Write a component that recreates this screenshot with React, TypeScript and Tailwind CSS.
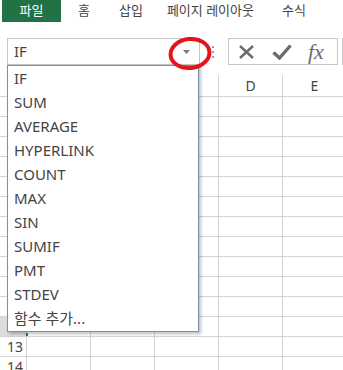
import React from "react";

const FUNCS = ["IF", "SUM", "AVERAGE", "HYPERLINK", "COUNT", "MAX", "SIN", "SUMIF", "PMT", "STDEV", "함수 추가..."];
const COLS = ["A", "B", "C", "D", "E"];
const ROWS = Array.from({ length: 14 }, (_, i) => i + 1);

const font = { fontFamily: '"Noto Sans", "Noto Sans CJK KR", sans-serif' };

export default function App() {
    return (
        <div className="relative w-[343px] h-[370px] overflow-hidden bg-white text-[#444]" style={font}>
            {/* ribbon tabs */}
            <div className="flex items-center h-[22px] text-[13px]">
                <div className="ml-[2px] w-[59px] h-[22px] bg-[#217346] text-white flex items-center justify-center">파일</div>
                <div className="ml-[17px]">홈</div>
                <div className="ml-[29px]">삽입</div>
                <div className="ml-[24px]">페이지 레이아웃</div>
                <div className="ml-[28px]">수식</div>
            </div>

            {/* formula bar */}
            <div className="flex items-center mt-[16px] h-[27px]">
                <div className="ml-[7px] w-[193px] h-[27px] border border-[#c6c6c6] flex items-center justify-between pl-[6px] pr-[9px] text-[15px]">
                    <span>IF</span>
                    <svg width="7" height="4" viewBox="0 0 7 4">
                        <path d="M0 0 L7 0 L3.5 4 Z" fill="#7a7a7a" />
                    </svg>
                </div>
                <div className="ml-[12px] flex flex-col gap-[3px]">
                    <span className="w-[2px] h-[2px] bg-[#a0a0a0]" />
                    <span className="w-[2px] h-[2px] bg-[#a0a0a0]" />
                    <span className="w-[2px] h-[2px] bg-[#a0a0a0]" />
                </div>
                <div className="ml-[14px] w-[110px] h-[27px] border border-[#c6c6c6] flex items-center">
                    <svg className="ml-[10px]" width="15" height="14" viewBox="0 0 15 14">
                        <path d="M1 1 L14 13 M14 1 L1 13" stroke="#6b6b6b" strokeWidth="2.4" />
                    </svg>
                    <svg className="ml-[18px]" width="20" height="16" viewBox="0 0 20 16">
                        <path d="M1.5 8.5 L7.5 14 L18.5 1.5" stroke="#6b6b6b" strokeWidth="3.4" fill="none" />
                    </svg>
                    <span className="ml-[16px] text-[22px] italic text-[#6b6b6b] leading-none" style={{ fontFamily: '"Liberation Serif", serif' }}>
                        fx
                    </span>
                </div>
                <div className="ml-[4px] w-px h-[27px] bg-[#c6c6c6]" />
            </div>

            {/* sheet grid */}
            <div className="mt-[10px]">
                <div className="flex h-[22px] border-b border-[#d4d4d4]">
                    <div className="w-[27px] shrink-0 border-r border-[#d4d4d4]" />
                    {COLS.map((c) => (
                        <div key={c} className="w-[64px] shrink-0 border-r border-[#d4d4d4] flex items-center justify-center text-[14px]">
                            {c === "D" || c === "E" ? c : ""}
                        </div>
                    ))}
                </div>
                {ROWS.map((r) => (
                    <div key={r} className="flex h-[20px] border-b border-[#d4d4d4]">
                        <div
                            className={`w-[27px] shrink-0 border-r border-[#d4d4d4] flex items-center pl-[7px] text-[14px] ${
                                r === 12 ? "bg-[#dcdcdc]" : ""
                            }`}
                        >
                            {r >= 13 ? r : ""}
                        </div>
                        {COLS.map((c) => (
                            <div key={c} className="w-[64px] shrink-0 border-r border-[#d4d4d4]" />
                        ))}
                    </div>
                ))}
            </div>

            {/* function dropdown */}
            <div className="absolute left-[7px] top-[65px] w-[192px] bg-white border border-[#7b8fab] shadow-[2px_2px_3px_rgba(0,0,0,0.25)] pb-[1px]">
                {FUNCS.map((f) => (
                    <div key={f} className="h-[24px] flex items-center pl-[6px] text-[15px]">
                        {f}
                    </div>
                ))}
            </div>
            <div className="absolute left-[26px] top-[333px] w-[2px] h-[3px] bg-[#217346]" />

            {/* annotation circle */}
            <svg className="absolute left-[166px] top-[35px]" width="48" height="38" viewBox="0 0 48 38">
                <ellipse cx="24" cy="18.5" rx="19.5" ry="14.5" fill="none" stroke="#e3141c" strokeWidth="4" transform="rotate(-6 24 18.5)" />
            </svg>
        </div>
    );
}
